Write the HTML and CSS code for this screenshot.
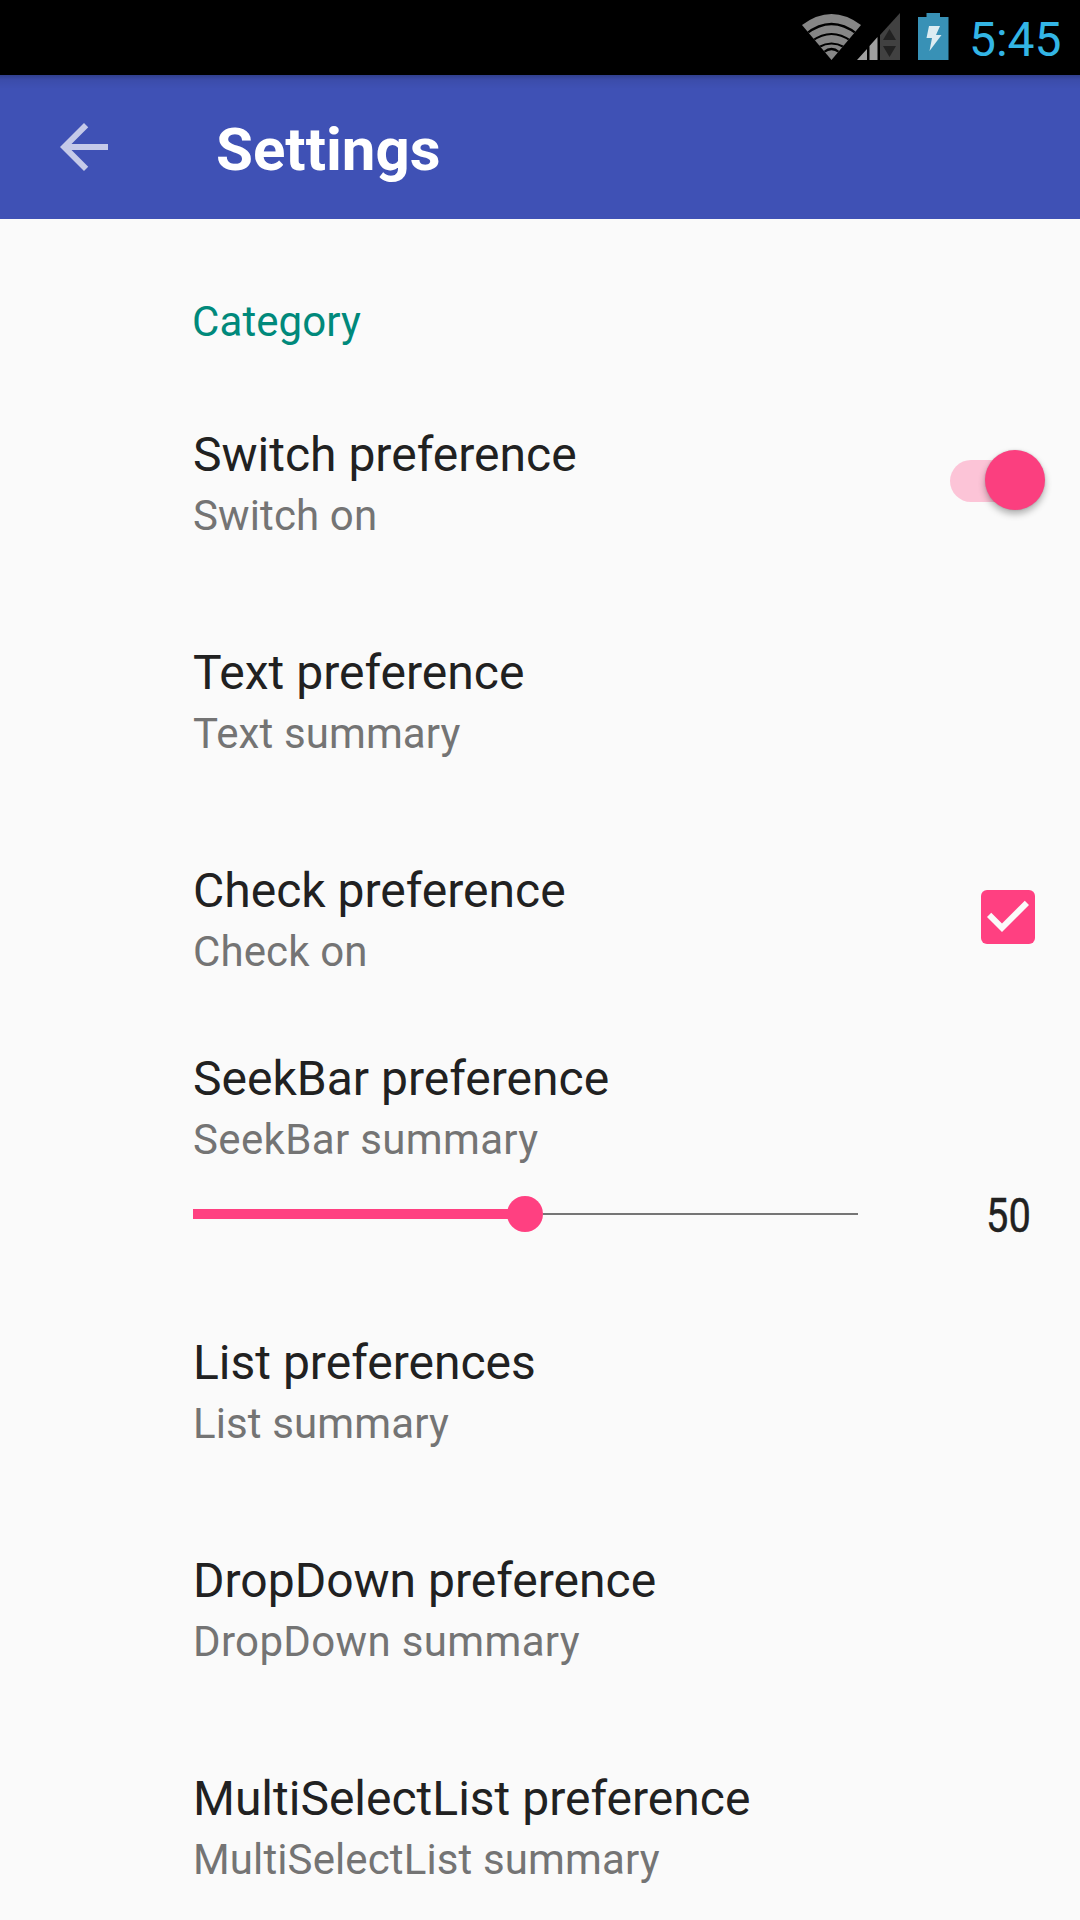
FILE: index.html
```html
<!DOCTYPE html>
<html lang="en">
<head>
<meta charset="utf-8">
<title>Settings</title>
<link rel="stylesheet" href="styles.css">
</head>
<body>
<div class="status-bar">
  <svg class="wifi" width="60" height="47" viewBox="0 0 60 47">
    <defs><clipPath id="fan"><path d="M0 12Q29.500 -10 59 12L29.500 47Z"/></clipPath></defs>
    <g clip-path="url(#fan)">
      <rect width="60" height="47" fill="#868686"/>
      <g fill="none" stroke="#000" stroke-width="2.200">
        <path d="M4 21Q29.500 1 55 21"/>
        <path d="M10 28Q29.500 14 49 28"/>
        <path d="M17 34Q29.500 27 42 34"/>
        <path d="M22 39Q29.500 33 37 39"/>
      </g>
    </g>
  </svg>
  <svg class="signal" width="44" height="48" viewBox="0 0 44 48">
    <path d="M43 0V47H23V22Z" fill="#414141"/>
    <path d="M0 47L10 36V47ZM12.500 47V33L20.500 24V47Z" fill="#a0a0a0"/>
    <path d="M32.500 16L39 27H26ZM26 33H39L32.500 44Z" fill="#222"/>
  </svg>
  <svg class="battery" width="31" height="48" viewBox="0 0 31 48">
    <path d="M8.500 0H22V4H30.500V47H0V4H8.500Z" fill="#3891b6"/>
    <path d="M11 13H22L18 22H23.500L11.500 38L14 25H8.500Z" fill="#dcecf2"/>
  </svg>
  <span class="clock">5:45</span>
</div>
<header class="app-bar">
  <svg class="back" width="72" height="72" viewBox="0 0 24 24"><path d="M20 11H7.830l5.590-5.590L12 4l-8 8 8 8 1.410-1.410L7.830 13H20z" fill="#c5cae9"/></svg>
  <h1 class="heading">Settings</h1>
</header>
<main class="list">
  <h2 class="category">Category</h2>
  <section class="row">
    <div class="text"><div class="title">Switch preference</div><div class="summary">Switch on</div></div>
    <div class="switch"><div class="thumb"></div></div>
  </section>
  <section class="row">
    <div class="text"><div class="title">Text preference</div><div class="summary">Text summary</div></div>
  </section>
  <section class="row">
    <div class="text"><div class="title">Check preference</div><div class="summary">Check on</div></div>
    <svg class="checkbox" width="72" height="72" viewBox="0 0 24 24"><rect x="3" y="3" width="18" height="18" rx="2" fill="#ff4081"/><path d="M10 17l-5-5 1.410-1.410L10 14.170l7.590-7.590L19 8z" fill="#fafafa"/></svg>
  </section>
  <section class="row seek-row">
    <div class="text"><div class="title">SeekBar preference</div><div class="summary wide">SeekBar summary</div></div>
    <div class="seek">
      <div class="fill"></div><div class="knob"></div><div class="rest"></div>
      <span class="value">50</span>
    </div>
  </section>
  <section class="row">
    <div class="text"><div class="title">List preferences</div><div class="summary">List summary</div></div>
  </section>
  <section class="row">
    <div class="text"><div class="title">DropDown preference</div><div class="summary wide">DropDown summary</div></div>
  </section>
  <section class="row">
    <div class="text"><div class="title">MultiSelectList preference</div><div class="summary">MultiSelectList summary</div></div>
  </section>
</main>
</body>
</html>
```
FILE: styles.css
```css
* { box-sizing: border-box; }
body {
  margin: 0;
  width: 1080px;
  height: 1920px;
  overflow: hidden;
  background: #fafafa;
  font-family: Roboto, sans-serif;
}
svg { display: block; flex: none; }
.status-bar {
  display: flex;
  justify-content: flex-end;
  height: 75px;
  padding: 13px 20px 0 0;
  background: #000;
}
.wifi { margin-right: -5px; }
.signal { margin-right: 17px; }
.battery { margin-right: 20px; }
.clock { width: 91px; color: #33b5e5; font-size: 48px; line-height: 54px; white-space: nowrap; }
.app-bar {
  display: flex;
  align-items: center;
  height: 144px;
  padding-left: 48px;
  background: linear-gradient(rgba(0, 0, 0, .22), rgba(0, 0, 0, .06) 5px, transparent 14px), #3f51b5;
}
.heading { margin: 6px 0 0 96px; color: #fff; font-size: 60px; line-height: 72px; font-weight: 700; }
.category {
  height: 152px;
  margin: 0;
  padding: 77px 0 0 192px;
  color: #00897b;
  font-size: 42px;
  line-height: 52px;
  font-weight: 400;
  letter-spacing: .1px;
}
.row {
  display: flex;
  justify-content: space-between;
  height: 218px;
  padding: 54px 36px 0 193px;
}
.title { color: #212121; font-size: 48px; line-height: 60px; white-space: nowrap; }
.summary { color: #747474; font-size: 42px; line-height: 62px; letter-spacing: .12px; white-space: nowrap; }
.summary.wide { letter-spacing: .35px; }
.switch {
  width: 92px;
  height: 42px;
  margin: 35px 2px 0 0;
  border-radius: 21px;
  background: #fcc4d7;
}
.thumb {
  width: 60px;
  height: 60px;
  margin: -10px 0 0 35px;
  border-radius: 50%;
  background: #fb3f7f;
  box-shadow: 0 4px 7px rgba(0, 0, 0, .3), 0 0 2px rgba(0, 0, 0, .15);
}
.checkbox { margin: 20px 0 0; }
.seek-row { display: block; height: 254px; padding-top: 24px; }
.seek { display: flex; align-items: center; height: 50px; margin: 18px -36px 0 0; }
.fill { width: 315px; height: 10px; background: #ff4081; }
.knob { width: 36px; height: 36px; margin-left: -1px; border-radius: 50%; background: #ff4081; }
.rest { width: 315px; height: 2px; background: #757575; }
.value {
  margin: 4px 0 0 128px;
  color: #212121;
  font-size: 48px;
  line-height: 56px;
  -webkit-text-stroke: .4px #212121;
  transform: scaleX(.83);
  transform-origin: 0 50%;
}
```
